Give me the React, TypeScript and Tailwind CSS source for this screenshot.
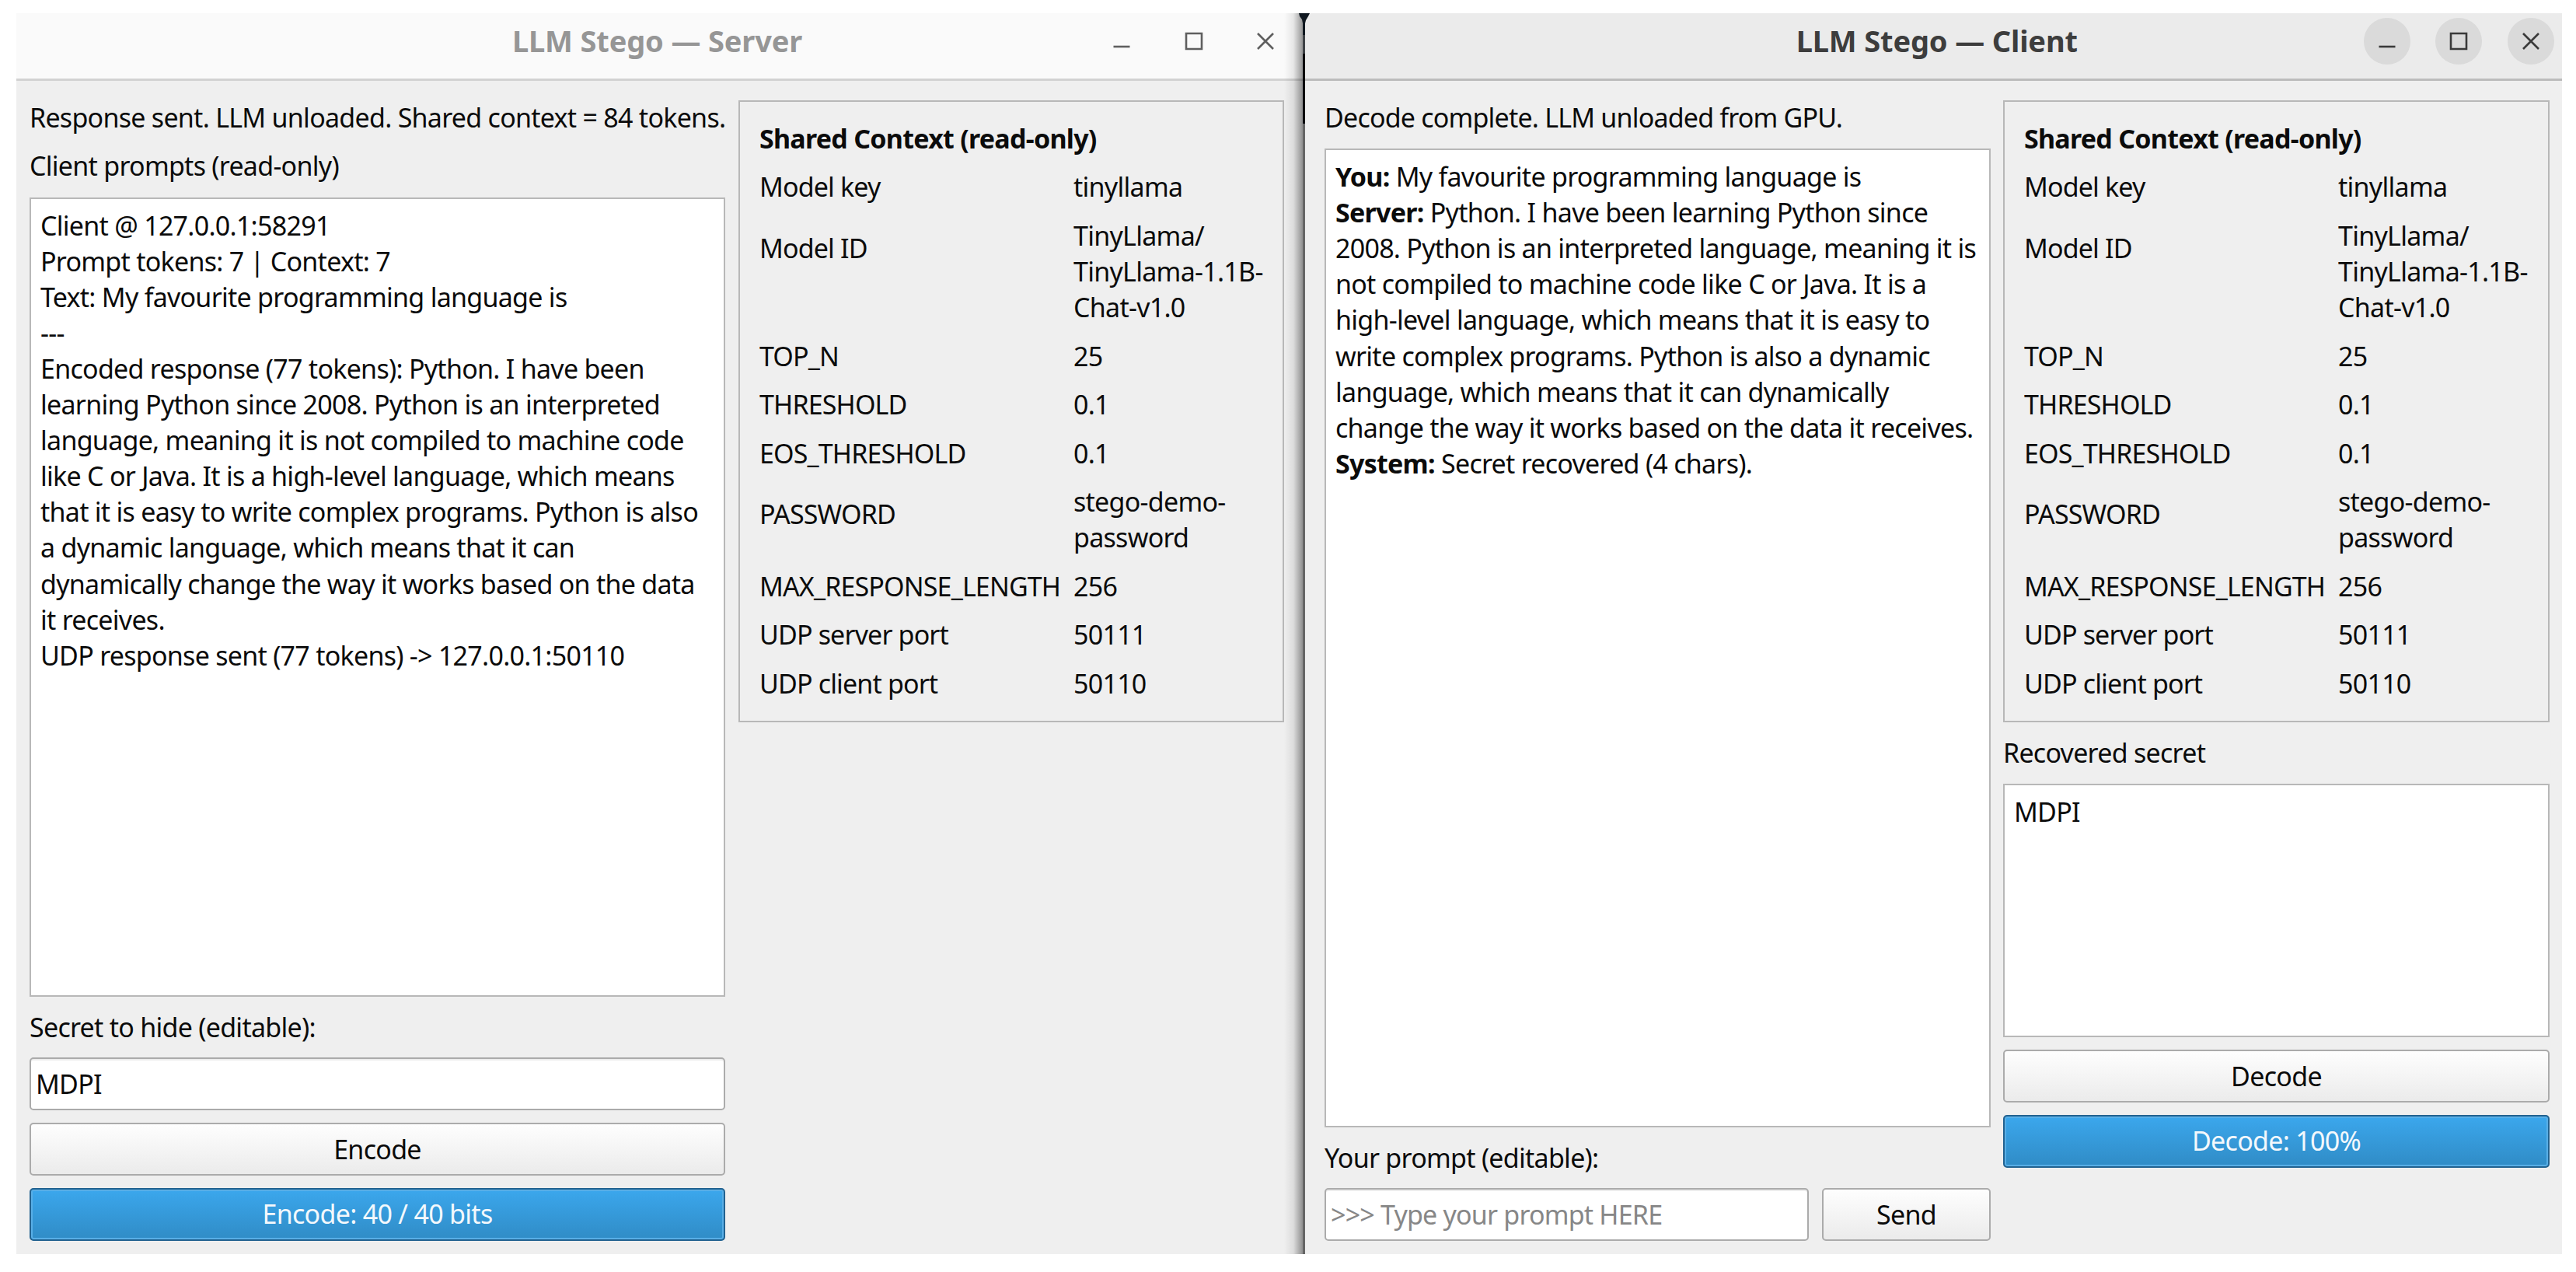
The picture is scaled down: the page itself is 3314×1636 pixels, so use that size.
import type { ReactNode } from "react";
import clsx from "clsx";

const contextRows = [
  { label: "Model key", value: ["tinyllama"] },
  { label: "Model ID", value: ["TinyLlama/", "TinyLlama-1.1B-", "Chat-v1.0"] },
  { label: "TOP_N", value: ["25"] },
  { label: "THRESHOLD", value: ["0.1"] },
  { label: "EOS_THRESHOLD", value: ["0.1"] },
  { label: "PASSWORD", value: ["stego-demo-", "password"] },
  { label: "MAX_RESPONSE_LENGTH", value: ["256"] },
  { label: "UDP server port", value: ["50111"] },
  { label: "UDP client port", value: ["50110"] },
];

const serverLog = [
  "Client @ 127.0.0.1:58291",
  "Prompt tokens: 7 | Context: 7",
  "Text: My favourite programming language is",
  "---",
  "Encoded response (77 tokens): Python. I have been",
  "learning Python since 2008. Python is an interpreted",
  "language, meaning it is not compiled to machine code",
  "like C or Java. It is a high-level language, which means",
  "that it is easy to write complex programs. Python is also",
  "a dynamic language, which means that it can",
  "dynamically change the way it works based on the data",
  "it receives.",
  "UDP response sent (77 tokens) -> 127.0.0.1:50110",
];

const chatLog = [
  { who: "You:", text: "My favourite programming language is" },
  { who: "Server:", text: "Python. I have been learning Python since" },
  { text: "2008. Python is an interpreted language, meaning it is" },
  { text: "not compiled to machine code like C or Java. It is a" },
  { text: "high-level language, which means that it is easy to" },
  { text: "write complex programs. Python is also a dynamic" },
  { text: "language, which means that it can dynamically" },
  { text: "change the way it works based on the data it receives." },
  { who: "System:", text: "Secret recovered (4 chars)." },
];

function WindowButton({ active, children }: { active: boolean; children: ReactNode }) {
  return (
    <button
      className={clsx(
        "flex size-[60px] items-center justify-center rounded-full",
        active ? "bg-[#dadada] text-[#3a3a3a]" : "text-[#5f5f5f]"
      )}
    >
      <svg
        width="24"
        height="24"
        viewBox="0 0 24 24"
        fill="none"
        stroke="currentColor"
        strokeWidth="2.6"
        aria-hidden="true"
      >
        {children}
      </svg>
    </button>
  );
}

function TitleBar({ title, active }: { title: string; active: boolean }) {
  return (
    <header
      className={clsx(
        "grid h-[87px] shrink-0 grid-cols-[1fr_auto_1fr] border-b-[3px] pt-[5.5px]",
        active
          ? "border-[#bcbcbc] bg-[#ebebeb] pr-[10.5px] pl-[19px]"
          : "border-[#d2d2d2] bg-[#fafafa] pr-[18px] pl-[12px]"
      )}
    >
      <span />
      <h1
        className={clsx(
          "text-[38px] leading-[58px] font-bold tracking-[-0.15px] whitespace-nowrap",
          active ? "text-[#3d3d3d]" : "text-[#969696]"
        )}
      >
        {title}
      </h1>
      <div className="flex justify-end gap-[32.4px]">
        <WindowButton active={active}>
          <path d="M1.5 19H22.5" />
        </WindowButton>
        <WindowButton active={active}>
          <path d="M2 2H22V22H2Z" />
        </WindowButton>
        <WindowButton active={active}>
          <path d="M2 2L22 22M22 2L2 22" />
        </WindowButton>
      </div>
    </header>
  );
}

function SharedContext() {
  return (
    <section className="h-[800px] shrink-0 border-2 border-[#b8b8b8] px-[25px] pt-[24px]">
      <h2 className="font-bold">Shared Context (read-only)</h2>
      <dl className="mt-[16.4px] flex flex-col gap-[16.4px]">
        {contextRows.map((row) => (
          <div key={row.label} className="flex items-start">
            <dt
              className={clsx(
                "w-[404px] shrink-0 tracking-[-0.85px]",
                row.value.length > 1 && "pt-4"
              )}
            >
              {row.label}
            </dt>
            <dd>
              {row.value.map((line) => (
                <p key={line}>{line}</p>
              ))}
            </dd>
          </div>
        ))}
      </dl>
    </section>
  );
}

function TextBox({ className, children }: { className?: string; children: ReactNode }) {
  return (
    <div className={clsx("border-2 border-[#b8b8b8] bg-white px-[12px] pt-[11px]", className)}>
      {children}
    </div>
  );
}

function Field({ className, children }: { className?: string; children: ReactNode }) {
  return (
    <div
      className={clsx(
        "h-[68px] rounded-[5px] border-2 border-[#ababab] bg-white pt-[9px] pl-[6px] shadow-[inset_0_2px_0_#ececec]",
        className
      )}
    >
      {children}
    </div>
  );
}

function PushButton({ className, children }: { className?: string; children: ReactNode }) {
  return (
    <button
      className={clsx(
        "flex h-[68px] shrink-0 justify-center rounded-[5px] border-2 border-[#ababab] bg-linear-to-b from-[#fefefe] to-[#ebebeb] pt-[9px] tracking-[-0.7px]",
        className
      )}
    >
      {children}
    </button>
  );
}

function Progress({ className, children }: { className?: string; children: ReactNode }) {
  return (
    <div
      className={clsx(
        "h-[68px] shrink-0 rounded-[5px] border-2 border-[#226290] bg-linear-to-b from-[#3ba7ed] to-[#308cc6] pt-[8.5px] text-center tracking-[-0.7px] text-[#f3f8fc] shadow-[inset_0_0_0_2px_#58aee6]",
        className
      )}
    >
      {children}
    </div>
  );
}

function ServerWindow() {
  return (
    <main className="flex w-[1655px] flex-col bg-[#efefef]">
      <TitleBar title="LLM Stego — Server" active={false} />
      <div className="flex flex-1 gap-[17px] pt-[24px] pl-[17px]">
        <div className="flex w-[895px] flex-col">
          <p>Response sent. LLM unloaded. Shared context = 84 tokens.</p>
          <p className="mt-[16.4px]">Client prompts (read-only)</p>
          <TextBox className="mt-[17px] h-[1028px]">
            {serverLog.map((line) => (
              <p key={line}>{line}</p>
            ))}
          </TextBox>
          <p className="mt-[16px]">Secret to hide (editable):</p>
          <Field className="mt-[16px]">MDPI</Field>
          <PushButton className="mt-4">Encode</PushButton>
          <Progress className="mt-4">Encode: 40 / 40 bits</Progress>
        </div>
        <div className="flex w-[702px] flex-col pt-px">
          <SharedContext />
        </div>
      </div>
    </main>
  );
}

function ClientWindow() {
  return (
    <main className="flex w-[1617px] flex-col bg-[#efefef]">
      <TitleBar title="LLM Stego — Client" active />
      <div className="flex flex-1 gap-4 pt-[24px] pl-[25px]">
        <div className="flex w-[857px] flex-col">
          <p className="tracking-[-0.8px]">Decode complete. LLM unloaded from GPU.</p>
          <TextBox className="mt-[17px] h-[1259px]">
            {chatLog.map((line) => (
              <p key={line.text}>
                {line.who && <b>{line.who} </b>}
                {line.text}
              </p>
            ))}
          </TextBox>
          <p className="mt-[16px]">Your prompt (editable):</p>
          <div className="mt-[16px] flex gap-[17px]">
            <Field className="w-[623px] tracking-[-0.8px] text-[#878787]">
              {">>> Type your prompt HERE"}
            </Field>
            <PushButton className="flex-1">Send</PushButton>
          </div>
        </div>
        <div className="flex w-[703px] flex-col pt-px">
          <SharedContext />
          <p className="mt-[16px]">Recovered secret</p>
          <TextBox className="mt-[16.5px] h-[326px]">MDPI</TextBox>
          <PushButton className="mt-4">Decode</PushButton>
          <Progress className="mt-4">Decode: 100%</Progress>
        </div>
      </div>
    </main>
  );
}

// Strip of desktop that shows between the two windows, with the client's drop shadow
function Seam() {
  return (
    <div className="relative flex w-[3px] flex-col bg-[#666]">
      <div className="absolute inset-y-0 right-full w-[24px] bg-linear-to-r from-transparent via-black/8 to-black/40" />
      <div className="h-[28px] bg-[#101820]" />
      <div className="h-[24px] bg-[#3e4246]" />
      <div className="h-[90px] bg-[#05070d]" />
      <svg className="absolute top-0 left-[-5px]" width="14" height="13" viewBox="0 0 14 13">
        <path d="M0 0H14L12 4L9 9L8 13H5L4 8L1 4Z" fill="#101820" />
      </svg>
    </div>
  );
}

export default function App() {
  return (
    <div className="h-[1636px] w-[3314px] overflow-hidden bg-white pt-[17px] pl-[21px] font-['Noto_Sans',sans-serif] text-[34px] leading-[46.1px] tracking-[-0.73px] whitespace-nowrap text-[#0b0b0b]">
      <div className="flex h-[1596px]">
        <ServerWindow />
        <Seam />
        <ClientWindow />
      </div>
    </div>
  );
}
